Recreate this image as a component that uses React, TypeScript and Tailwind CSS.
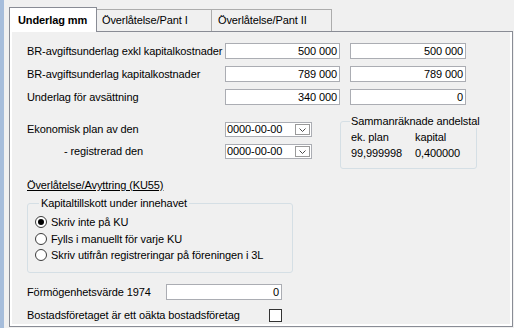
import React from 'react';

function NumBox({ value, className = '' }: { value: string; className?: string }) {
  return (
    <div
      className={`flex h-[16px] items-center justify-end border border-[#abadb3] bg-white pr-[2px] leading-none ${className}`}
    >
      {value}
    </div>
  );
}

function DateBox() {
  return (
    <div className="flex h-[15px] w-[87px] items-center justify-between border border-[#abadb3] bg-white pl-[1px] pr-px leading-none">
      <span>0000-00-00</span>
      <div className="flex h-[11px] w-[15px] items-end justify-center border border-[#9a9a9a] bg-white pb-[2px]">
        <svg width="7" height="4" viewBox="0 0 7 4">
          <path d="M0.5 0.5 L3.5 3.5 L6.5 0.5" fill="none" stroke="#4a4a4a" strokeWidth="1" />
        </svg>
      </div>
    </div>
  );
}

function Radio({ checked, label }: { checked?: boolean; label: string }) {
  return (
    <div className="flex h-[16.5px] items-center gap-[4px]">
      <div className="flex h-[12px] w-[12px] items-center justify-center rounded-full border border-[#3c3c3c] bg-white">
        {checked && <div className="h-[6px] w-[6px] rounded-full bg-black" />}
      </div>
      <span>{label}</span>
    </div>
  );
}

export default function App() {
  const rows = [
    { label: 'BR-avgiftsunderlag exkl kapitalkostnader', a: '500 000', b: '500 000' },
    { label: 'BR-avgiftsunderlag kapitalkostnader', a: '789 000', b: '789 000' },
    { label: 'Underlag för avsättning', a: '340 000', b: '0' },
  ];

  return (
    <div className="flex h-[328px] w-[514px] overflow-hidden bg-[#f0f0f0] font-['Liberation_Sans',Arial,sans-serif] text-[11px] tracking-[-0.1px] text-black">
      {/* Left strip */}
      <div className="w-[4px] shrink-0 bg-[#a6bddb]" />

      <div className="ml-[5px] flex flex-col pt-[7px]">
        {/* Tabs */}
        <div className="flex h-[24px] items-end">
          <div className="relative z-10 -mb-px flex h-[25px] w-[88px] items-center border border-b-0 border-[#898c95] bg-white pl-[8px] font-bold">
            Underlag mm
          </div>
          <div className="flex h-[22px] w-[115px] items-center border border-b-0 border-l-0 border-[#acacac] bg-[#f0f0f0] pl-[5px]">
            Överlåtelse/Pant I
          </div>
          <div className="flex h-[22px] w-[120px] items-center border border-b-0 border-l-0 border-[#acacac] bg-[#f0f0f0] pl-[6px]">
            Överlåtelse/Pant II
          </div>
        </div>

        {/* Panel */}
        <div className="h-[296px] w-[504px] border border-[#898c95]">
          <div className="h-full border-x-2 border-b-2 border-white pl-[15px] pt-[11px]">
            {/* Amount rows */}
            <div className="flex flex-col gap-[7px]">
              {rows.map((r) => (
                <div key={r.label} className="flex h-[16px] items-center">
                  <div className="w-[198px]">{r.label}</div>
                  <NumBox value={r.a} className="w-[115px]" />
                  <NumBox value={r.b} className="ml-[10px] w-[116px]" />
                </div>
              ))}
            </div>

            {/* Dates + andelstal */}
            <div className="mt-[16px] flex items-start">
              <div className="mt-px flex flex-col gap-[7px]">
                <div className="flex h-[15px] items-center">
                  <div className="w-[198px]">Ekonomisk plan av den</div>
                  <DateBox />
                </div>
                <div className="flex h-[15px] items-center">
                  <div className="w-[198px] pl-[37px]">- registrerad den</div>
                  <DateBox />
                </div>
              </div>

              <div className="relative ml-[28px] h-[48px] w-[137px] rounded-[3px] border border-[#d5dfe5]">
                <div className="absolute -top-[7px] left-[9px] whitespace-nowrap bg-[#f0f0f0] px-px leading-[13px]">
                  Sammanräknade andelstal
                </div>
                <div className="grid grid-cols-[64px_1fr] gap-y-[2px] pl-[10px] pt-[8px] leading-[14px]">
                  <span>ek. plan</span>
                  <span>kapital</span>
                  <span>99,999998</span>
                  <span>0,400000</span>
                </div>
              </div>
            </div>

            {/* KU55 */}
            <div className="mt-[9px] h-[14px] leading-[14px] underline">Överlåtelse/Avyttring (KU55)</div>

            <div className="relative mt-[11px] h-[70px] w-[266px] rounded-[3px] border border-[#d5dfe5]">
              <div className="absolute -top-[7px] left-[11px] whitespace-nowrap bg-[#f0f0f0] px-[2px] leading-[13px]">
                Kapitaltillskott under innehavet
              </div>
              <div className="flex flex-col pl-[7px] pt-[10px]">
                <Radio checked label="Skriv inte på KU" />
                <Radio label="Fylls i manuellt för varje KU" />
                <Radio label="Skriv utifrån registreringar på föreningen i 3L" />
              </div>
            </div>

            <div className="mt-[11px] flex h-[16px] items-center">
              <div className="w-[139px]">Förmögenhetsvärde 1974</div>
              <NumBox value="0" className="w-[116px]" />
            </div>

            <div className="mt-[7px] flex h-[16px] items-center">
              <div className="w-[242px]">Bostadsföretaget är ett oäkta bostadsföretag</div>
              <div className="h-[13px] w-[13px] border border-[#333333] bg-white" />
            </div>
          </div>
        </div>
      </div>
    </div>
  );
}
